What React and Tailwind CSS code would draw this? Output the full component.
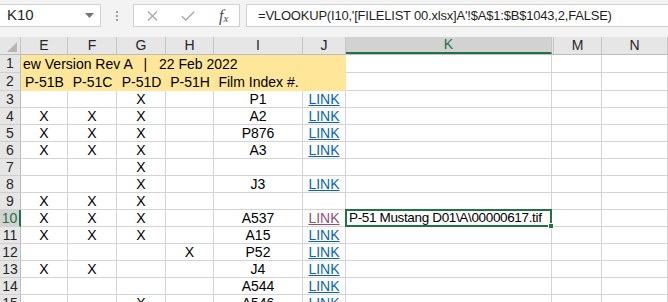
import React from 'react';

const COLS = [
  { key: 'e', label: 'E', w: 'w-[47px]' },
  { key: 'f', label: 'F', w: 'w-[49px]' },
  { key: 'g', label: 'G', w: 'w-[49px]' },
  { key: 'h', label: 'H', w: 'w-[48px]' },
  { key: 'i', label: 'I', w: 'w-[89px]' },
  { key: 'j', label: 'J', w: 'w-[43px]' },
  { key: 'k', label: 'K', w: 'w-[206px]' },
  { key: 'm', label: 'M', w: 'w-[50px]' },
  { key: 'colN', label: 'N', w: 'w-[66px]' },
];

const ROWS = [
  { row: 3, g: 'X', i: 'P1', j: 'link' },
  { row: 4, e: 'X', f: 'X', g: 'X', i: 'A2', j: 'link' },
  { row: 5, e: 'X', f: 'X', g: 'X', i: 'P876', j: 'link' },
  { row: 6, e: 'X', f: 'X', g: 'X', i: 'A3', j: 'link' },
  { row: 7, g: 'X' },
  { row: 8, g: 'X', i: 'J3', j: 'link' },
  { row: 9, e: 'X', f: 'X', g: 'X' },
  { row: 10, e: 'X', f: 'X', g: 'X', i: 'A537', j: 'visited', k: 'P-51 Mustang D01\\A\\00000617.tif' },
  { row: 11, e: 'X', f: 'X', g: 'X', i: 'A15', j: 'link' },
  { row: 12, h: 'X', i: 'P52', j: 'link' },
  { row: 13, e: 'X', f: 'X', i: 'J4', j: 'link' },
  { row: 14, i: 'A544', j: 'link' },
  { row: 15, g: 'X', i: 'A546', j: 'link' },
];

const HEADS = ['P-51B', 'P-51C', 'P-51D', 'P-51H', 'Film Index #.'];

function Toolbar() {
  return (
    <div className="h-[37px] bg-[#f3f3f3] flex items-start pt-[4px]">
      {/* name box */}
      <div className="w-[101px] h-[23px] bg-white border border-l-0 border-[#d0d0d0] flex items-center justify-between pl-[7px] pr-[6px]">
        <span className="text-[15px] text-[#1f1f1f] font-['Liberation_Sans']">K10</span>
        <svg width="9" height="5" viewBox="0 0 9 5"><path d="M0 0H9L4.5 5Z" fill="#767676" /></svg>
      </div>
      <div className="w-[32px] h-[23px] flex flex-col items-center justify-center gap-[2px]">
        <span className="w-[2px] h-[2px] bg-[#a0a0a0]" />
        <span className="w-[2px] h-[2px] bg-[#a0a0a0]" />
        <span className="w-[2px] h-[2px] bg-[#a0a0a0]" />
      </div>
      {/* cancel / enter / fx */}
      <div className="w-[107px] h-[23px] bg-white border border-[#d0d0d0] flex items-center pl-[13px]">
        <svg width="11" height="10" viewBox="0 0 11 10"><path d="M1 0.5L10 9.5M10 0.5L1 9.5" stroke="#a8a8a8" strokeWidth="1.3" /></svg>
        <svg className="ml-[23px]" width="14" height="10" viewBox="0 0 14 10"><path d="M0.8 5.2L4.8 9L13.2 0.7" stroke="#a8a8a8" strokeWidth="1.3" fill="none" /></svg>
        <span className="ml-[24px] font-['Liberation_Serif'] italic text-[16px] text-[#4d4d4d] leading-none">
          f<span className="text-[11px] relative top-[1px]">x</span>
        </span>
      </div>
      {/* formula */}
      <div className="ml-[6px] flex-1 h-[23px] bg-white border border-r-0 border-[#d0d0d0] flex items-center pl-[11px] whitespace-pre overflow-hidden">
        <span className="text-[13px] tracking-[-0.2px] text-[#1f1f1f] font-['Liberation_Sans']">
          =VLOOKUP(I10,'[FILELIST 00.xlsx]A'!$A$1:$B$1043,2,FALSE)
        </span>
      </div>
    </div>
  );
}

function ColHeader() {
  return (
    <div className="flex h-[18px] bg-[#e6e6e6] border-b border-[#bdbdbd]">
      <div className="w-[21px] h-full border-r border-[#c6c6c6] flex items-end justify-end pr-[3px] pb-[2px]">
        <svg width="10" height="10" viewBox="0 0 10 10"><path d="M10 0V10H0Z" fill="#b7b7b7" /></svg>
      </div>
      {COLS.map((c) => {
        const sel = c.key === 'k';
        if (c.key === 'm') {
          return (
            <div key={c.key} className={`${c.w} h-full pl-px`}>
              <div className="h-full border-l border-r border-[#c6c6c6] flex items-center justify-center text-[14px] text-[#262626]">{c.label}</div>
            </div>
          );
        }
        return (
          <div
            key={c.key}
            className={`${c.w} h-full flex items-center justify-center text-[14px] border-r border-[#c6c6c6] ${sel ? 'bg-[#d2d2d2] text-[#217346] border-b-2 border-b-[#217346]' : 'text-[#262626]'}`}
          >
            {c.label}
          </div>
        );
      })}
    </div>
  );
}

function RowHead({ n, sel, h }) {
  return (
    <div className={`w-[21px] ${h} shrink-0 flex items-center justify-center text-[14px] border-b border-[#cfcfcf] ${sel ? 'bg-[#d2d2d2] text-[#217346] border-r-2 border-r-[#217346]' : 'bg-[#e6e6e6] text-[#262626] border-r border-r-[#bdbdbd]'}`}>
      {n}
    </div>
  );
}

function Cell({ w, children, className = '' }) {
  return (
    <div className={`${w} h-full shrink-0 border-r border-b border-[#d4d4d4] flex items-center justify-center overflow-hidden whitespace-pre ${className}`}>
      {children}
    </div>
  );
}

export default function App() {
  return (
    <div className="w-[668px] h-[302px] overflow-hidden bg-white font-['Liberation_Sans'] text-[#000]">
      <Toolbar />
      <ColHeader />

      {/* row 1 */}
      <div className="flex h-[18px]">
        <RowHead n={1} h="h-[18px]" />
        <div className="w-[325px] h-full bg-[#ffe699] text-[14px] leading-[18px] whitespace-pre overflow-hidden pl-[2px]">
          ew Version Rev A   |   22 Feb 2022
        </div>
        <Cell w="w-[206px]" />
        <Cell w="w-[50px]" />
        <Cell w="w-[66px]" />
      </div>

      {/* row 2 */}
      <div className="flex h-[18px]">
        <RowHead n={2} h="h-[18px]" />
        {COLS.slice(0, 6).map((c, idx) => (
          <div key={c.key} className={`${c.w} h-full bg-[#ffe699] flex items-center justify-center text-[14px] whitespace-pre`}>
            {HEADS[idx] || ''}
          </div>
        ))}
        <Cell w="w-[206px]" />
        <Cell w="w-[50px]" />
        <Cell w="w-[66px]" />
      </div>

      {ROWS.map((r) => {
        const sel = r.row === 10;
        return (
          <div key={r.row} className="flex h-[17px]">
            <RowHead n={r.row} sel={sel} h="h-[17px]" />
            {COLS.map((c) => {
              const v = r[c.key];
              if (c.key === 'j') {
                return (
                  <Cell key={c.key} w={c.w} className="text-[14px]">
                    {v && <span className={`underline ${v === 'visited' ? 'text-[#954f72]' : 'text-[#0563c1]'}`}>LINK</span>}
                  </Cell>
                );
              }
              if (c.key === 'k' && sel) {
                return (
                  <div key={c.key} className={`${c.w} h-full shrink-0 relative border-b border-r border-[#d4d4d4] text-[13.5px] tracking-[-0.35px] flex items-center pl-[3px] whitespace-pre`}>
                    {v}
                    <div className="absolute -left-px -top-px -right-px -bottom-px border-2 border-[#217346]" />
                    <div className="absolute -right-[3px] -bottom-[3px] w-[6px] h-[6px] bg-[#217346] border border-white" />
                  </div>
                );
              }
              return (
                <Cell key={c.key} w={c.w} className="text-[14px]">
                  {v || ''}
                </Cell>
              );
            })}
          </div>
        );
      })}
    </div>
  );
}
